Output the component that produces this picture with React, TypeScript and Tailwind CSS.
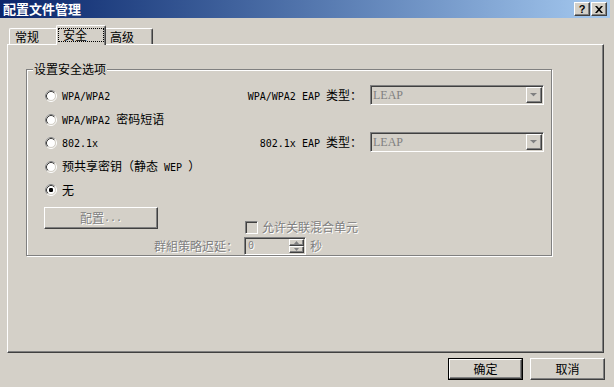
import React from "react";

const CJK = "font-['Noto_Sans_CJK_SC','Noto_Sans_CJK_JP',sans-serif]";
const raised =
  "border border-t-white border-l-white border-r-[#404040] border-b-[#404040] shadow-[inset_-1px_-1px_0_#808080]";
const sunken =
  "border border-t-[#808080] border-l-[#808080] border-r-white border-b-white shadow-[inset_1px_1px_0_#404040,inset_-1px_-1px_0_#d4d0c8]";
const dis = "text-[#808080] [text-shadow:1px_1px_0_#fff]";

function M({ children }: { children: React.ReactNode }) {
  return <span className="font-['DejaVu_Sans_Mono',monospace] text-[10px]">{children}</span>;
}

function Radio({ checked }: { checked?: boolean }) {
  return (
    <svg width="12" height="12" viewBox="0 0 12 12" className="shrink-0">
      <circle cx="6" cy="6" r="5.5" fill="none" stroke="#fff" />
      <path d="M2.11 9.89 A5.5 5.5 0 0 1 9.89 2.11" fill="none" stroke="#808080" />
      <circle cx="6" cy="6" r="4.5" fill="#fff" stroke="#d4d0c8" />
      <path d="M2.82 9.18 A4.5 4.5 0 0 1 9.18 2.82" fill="none" stroke="#404040" />
      {checked && <rect x="4" y="4" width="4" height="4" rx="1.2" fill="#000" />}
    </svg>
  );
}

function Select() {
  return (
    <div className={`w-[174px] h-[20px] mb-[2px] flex items-center bg-[#d4d0c8] p-[1px] ${sunken}`}>
      <span className="flex-1 pl-[1px] font-['Liberation_Serif',serif] text-[12px] leading-[14px] text-[#808080]">
        LEAP
      </span>
      <div className={`w-[16px] h-[16px] bg-[#d4d0c8] flex items-center justify-center ${raised}`}>
        <svg width="8" height="5" viewBox="0 0 8 5">
          <path d="M1 1h5L3.5 3.5z" fill="#fff" />
          <path d="M0 0h7L3.5 3.5z" fill="#808080" />
        </svg>
      </div>
    </div>
  );
}

function RadioRow({
  h,
  checked,
  children,
  right,
}: {
  h: string;
  checked?: boolean;
  children: React.ReactNode;
  right?: React.ReactNode;
}) {
  return (
    <div className={`flex items-center ${h}`}>
      <Radio checked={checked} />
      <span className="ml-[5px] whitespace-pre">{children}</span>
      {right && <div className="ml-auto flex items-center gap-[8px]">{right}</div>}
    </div>
  );
}

function TitleBtn({ children }: { children: React.ReactNode }) {
  return (
    <div className={`w-[16px] h-[14px] bg-[#d4d0c8] flex items-center justify-center ${raised}`}>
      {children}
    </div>
  );
}

export default function App() {
  return (
    <div
      className={`w-[614px] h-[387px] bg-[#d4d0c8] overflow-hidden text-[12px] leading-[14px] text-black ${CJK}`}
    >
      {/* title bar */}
      <div className="w-[610px] h-[18px] flex items-center bg-linear-to-r from-[#0a246a] to-[#a6caf0] pl-[3px] pr-[3px]">
        <span className="text-white font-bold text-[13px] leading-[16px]">配置文件管理</span>
        <div className="ml-auto flex gap-[1px]">
          <TitleBtn>
            <span className="font-['Liberation_Sans',sans-serif] font-bold text-[11px] leading-[11px]">?</span>
          </TitleBtn>
          <TitleBtn>
            <svg width="8" height="7" viewBox="0 0 8 7">
              <path d="M0 0h2l2 2.3L6 0h2L5 3.5 8 7H6L4 4.7 2 7H0l3-3.5z" fill="#000" />
            </svg>
          </TitleBtn>
        </div>
      </div>

      {/* tabs + panel */}
      <div className="ml-[7px] w-[597px]">
        <div className="mt-[7px] h-[19px] flex items-end pl-[2px]">
          <div className="w-[47px] h-[16px] border-t border-l border-white rounded-tl-[2px] flex items-center pl-[5px]">
            常规
          </div>
          <div className="relative z-10 -mb-px w-[50px] h-[20px] bg-[#d4d0c8] border-t border-l border-r border-t-white border-l-white border-r-[#404040] shadow-[inset_-1px_0_0_#808080] rounded-t-[2px] pt-[2px] pl-[1px]">
            <div className="w-[46px] h-[14px] border border-dotted border-black pl-[4px] flex items-center">
              安全
            </div>
          </div>
          <div className="w-[47px] h-[16px] border-t border-r border-t-white border-r-[#404040] shadow-[inset_-1px_0_0_#808080] rounded-tr-[2px] flex items-center pl-[4px]">
            高级
          </div>
        </div>

        <div className={`w-[597px] h-[309px] ${raised}`}>
          {/* group box */}
          <div className="relative ml-[18px] mt-[24px] w-[526px] h-[187px] border border-[#808080] shadow-[inset_1px_1px_0_#fff,1px_1px_0_#fff] pt-[14px] pl-[18px] pr-[7px]">
            <span className="absolute left-[6px] top-[-8px] px-[1px] bg-[#d4d0c8]">设置安全选项</span>

            <RadioRow
              h="h-[24px]"
              right={
                <>
                  <span className="whitespace-pre">
                    <M>WPA/WPA2 EAP </M>类型：
                  </span>
                  <Select />
                </>
              }
            >
              <M>WPA/WPA2</M>
            </RadioRow>
            <RadioRow h="h-[23px]">
              <M>WPA/WPA2 </M>密码短语
            </RadioRow>
            <RadioRow
              h="h-[24px]"
              right={
                <>
                  <span className="whitespace-pre">
                    <M>802.1x EAP </M>类型：
                  </span>
                  <Select />
                </>
              }
            >
              <M>802.1x</M>
            </RadioRow>
            <RadioRow h="h-[23px]">
              预共享密钥（静态<M> WEP </M>）
            </RadioRow>
            <RadioRow h="h-[24px]" checked>
              无
            </RadioRow>

            <div className="flex items-start mt-[5px]">
              <div className={`-ml-[1px] w-[114px] h-[22px] flex items-center justify-center ${raised} ${dis}`}>
                配置<M>...</M>
              </div>
              <div className="ml-[87px] mt-[13px] flex items-center gap-[4px]">
                <div className={`w-[13px] h-[13px] bg-[#d4d0c8] ${sunken}`} />
                <span className={dis}>允许关联混合单元</span>
              </div>
            </div>

            <div className="flex items-center mt-[3px] h-[18px]">
              <span className={`w-[193px] text-right ${dis}`}>群組策略迟延：</span>
              <div className={`ml-[6px] w-[62px] h-[18px] flex bg-[#d4d0c8] p-[1px] ${sunken}`}>
                <span className={`flex-1 pl-[2px] flex items-center ${dis}`}>
                  <M>0</M>
                </span>
                <div className="w-[15px] flex flex-col">
                  <div className={`flex-1 flex items-center justify-center ${raised}`}>
                    <svg width="5" height="3" viewBox="0 0 5 3">
                      <path d="M2.5 0L5 3H0z" fill="#808080" />
                    </svg>
                  </div>
                  <div className={`flex-1 flex items-center justify-center ${raised}`}>
                    <svg width="5" height="3" viewBox="0 0 5 3">
                      <path d="M0 0h5L2.5 3z" fill="#808080" />
                    </svg>
                  </div>
                </div>
              </div>
              <span className={`ml-[4px] ${dis}`}>秒</span>
            </div>
          </div>
        </div>
      </div>

      {/* bottom buttons */}
      <div className="mt-[5px] flex justify-end gap-[7px] pr-[9px]">
        <div className="w-[75px] h-[22px] border border-black flex">
          <div className={`flex-1 flex items-center justify-center ${raised}`}>确定</div>
        </div>
        <div className={`w-[75px] h-[22px] flex items-center justify-center ${raised}`}>取消</div>
      </div>
    </div>
  );
}
